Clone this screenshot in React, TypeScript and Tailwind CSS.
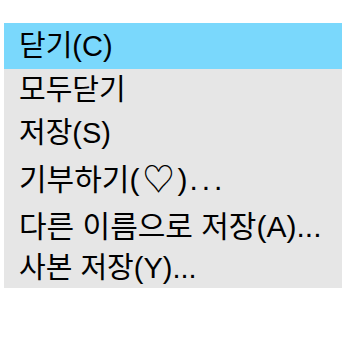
import React from "react";

const items: { label: React.ReactNode; h: string; size: string }[] = [
  { label: "닫기(C)", h: "h-[46px]", size: "text-[29px]" },
  { label: "모두닫기", h: "h-[42px]", size: "text-[29px]" },
  { label: "저장(S)", h: "h-[44px]", size: "text-[29px]" },
  {
    label: (
      <>
        기부하기(<span className="mx-[3px] text-[32px]">♡</span>)
        <span className="ml-[2px] tracking-[4px]">...</span>
      </>
    ),
    h: "h-[50px]",
    size: "text-[30px]",
  },
  { label: "다른 이름으로 저장(A)...", h: "h-[44px]", size: "text-[30px]" },
  { label: "사본 저장(Y)...", h: "h-[39px]", size: "text-[29px]" },
];

export default function App() {
  return (
    <div className="w-[350px] h-[350px] bg-white pt-[23px] pl-[4px]">
      <div
        className="w-[338px] flex flex-col bg-[#e6e6e6] text-black"
        style={{ fontFamily: '"Liberation Sans", "Noto Sans CJK KR", sans-serif' }}
      >
        {items.map((it, i) => (
          <div
            key={i}
            className={`${it.h} ${it.size} flex items-center pl-[15px] leading-none whitespace-nowrap ${
              i === 0 ? "bg-[#7ad8fc]" : ""
            }`}
          >
            {it.label}
          </div>
        ))}
      </div>
    </div>
  );
}
